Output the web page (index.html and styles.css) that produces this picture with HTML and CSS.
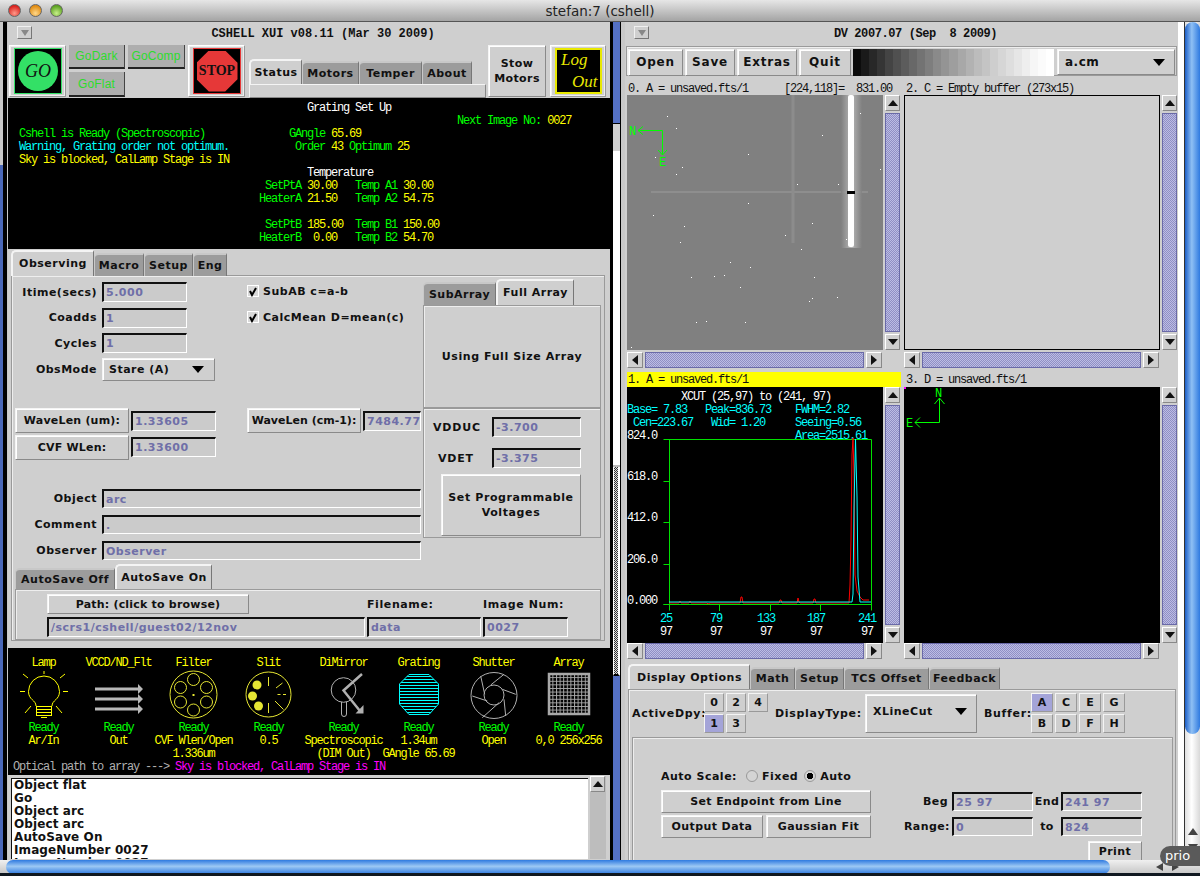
FILE: index.html
```html
<!DOCTYPE html>
<html lang="en">
<head>
<meta charset="utf-8">
<title>CSHELL XUI and DV</title>
<link rel="stylesheet" href="styles.css">
</head>
<body>
<div class="desktop">
  <div class="macbar">
    <span class="light red"></span><span class="light amber"></span><span class="light lime"></span>
    <span class="mactitle">stefan:7 (cshell)</span>
  </div>
  <div class="edge-left"></div>
  <div class="gap"><div class="seg-blue1"></div><div class="seg-grey"></div><div class="seg-white"></div><div class="seg-dith"></div><div class="seg-blue2"></div></div>

  <section class="win win-left">
    <header class="wintitle">
      <span class="menubtn"><i></i></span>
      <h1>CSHELL XUI v08.11 (Mar 30 2009)</h1>
    </header>
    <div class="ctl">
      <div class="frame"><div class="inner inner-go"><div class="go">GO</div></div></div>
      <div class="gobtns">
        <div class="gobtn">GoDark</div>
        <div class="gobtn">GoComp</div>
        <div class="gobtn">GoFlat</div>
      </div>
      <div class="frame"><div class="inner inner-stop"><div class="stop">STOP</div></div></div>
      <div class="status-tabs">
        <div class="tabs">
          <div class="tab on t-status">Status</div>
          <div class="tab t-motors">Motors</div>
          <div class="tab t-temper">Temper</div>
          <div class="tab t-about">About</div>
        </div>
        <div class="tabfill"></div>
      </div>
      <div class="btn stow">Stow<br>Motors</div>
      <div class="frame frame-log"><div class="inner inner-log"><span>Log</span><span class="out">Out</span></div></div>
    </div>
<pre class="black status x"><span class="w">                                                Grating Set Up</span>
                                                                         <span class="g">Next Image No: </span><span class="y">0027</span>
<span class="g">Cshell is Ready (Spectroscopic)              GAngle </span><span class="y">65.69</span>
<span class="c">Warning, Grating order not optimum.</span>           <span class="g">Order </span><span class="y">43</span><span class="g"> Optimum </span><span class="y">25</span>
<span class="y">Sky is blocked, CalLamp Stage is IN</span>
<span class="w">                                                Temperature</span>
                                         <span class="g">SetPtA </span><span class="y">30.00</span><span class="g">   Temp A1 </span><span class="y">30.00</span>
                                        <span class="g">HeaterA </span><span class="y">21.50</span><span class="g">   Temp A2 </span><span class="y">54.75</span>

                                         <span class="g">SetPtB </span><span class="y">185.00</span><span class="g">  Temp B1 </span><span class="y">150.00</span>
                                        <span class="g">HeaterB  </span><span class="y">0.00</span><span class="g">   Temp B2 </span><span class="y">54.70</span></pre>

    <div class="obs">
      <div class="tabs obs-tabs">
        <div class="tab on t-observing">Observing</div>
        <div class="tab t-macro">Macro</div>
        <div class="tab t-setup">Setup</div>
        <div class="tab t-eng">Eng</div>
      </div>
      <div class="panel obs-panel">
        <div class="obs-main">
          <div class="obs-left">
            <div class="obs-top">
              <div class="fields">
                <div class="frow"><label class="lab">Itime(secs)</label><div class="field f85">5.000</div></div>
                <div class="frow"><label class="lab">Coadds</label><div class="field f85">1</div></div>
                <div class="frow"><label class="lab">Cycles</label><div class="field f85">1</div></div>
                <div class="frow frow-sel"><label class="lab">ObsMode</label><div class="select sel-obs">Stare (A)<i class="caret"></i></div></div>
              </div>
              <div class="checks">
                <div class="check"><span class="box"><svg viewBox="0 0 11 11" width="11" height="11"><path d="M2 5l2 4 4-7" fill="none" stroke="#000" stroke-width="2"/></svg></span>SubAB c=a-b</div>
                <div class="check"><span class="box"><svg viewBox="0 0 11 11" width="11" height="11"><path d="M2 5l2 4 4-7" fill="none" stroke="#000" stroke-width="2"/></svg></span>CalcMean D=mean(c)</div>
              </div>
            </div>
            <div class="wrow wrow1">
              <div class="btn wbtn">WaveLen (um):</div><div class="field f85">1.33605</div>
              <div class="btn wbtn wbtn2">WaveLen (cm-1):</div><div class="field f58">7484.77</div>
            </div>
            <div class="wrow wrow2">
              <div class="btn wbtn">CVF WLen:</div><div class="field f85">1.33600</div>
            </div>
            <div class="longs">
              <div class="lrow"><label class="lab">Object</label><div class="field flong">arc</div></div>
              <div class="lrow"><label class="lab">Comment</label><div class="field flong">.</div></div>
              <div class="lrow"><label class="lab">Observer</label><div class="field flong">Observer</div></div>
            </div>
          </div>
          <div class="obs-right">
            <div class="tabs sub-tabs">
              <div class="tab t-sub">SubArray</div>
              <div class="tab on t-full">Full Array</div>
            </div>
            <div class="panel fullsize">Using Full Size Array</div>
            <div class="panel volt">
              <div class="vrow"><span class="vlab">VDDUC</span><div class="field f89">-3.700</div></div>
              <div class="vrow"><span class="vlab vlab2">VDET</span><div class="field f89">-3.375</div></div>
              <div class="btn vbtn">Set Programmable<br>Voltages</div>
            </div>
          </div>
        </div>
        <div class="tabs save-tabs">
          <div class="tab t-off">AutoSave Off</div>
          <div class="tab on t-on">AutoSave On</div>
        </div>
        <div class="panel save">
          <div class="btn pathbtn">Path: (click to browse)</div>
          <span class="savelab">Filename:</span>
          <span class="savelab">Image Num:</span>
          <div class="field">/scrs1/cshell/guest02/12nov</div>
          <div class="field">data</div>
          <div class="field">0027</div>
        </div>
      </div>
    </div>

    <div class="black mech x">
      <div class="mechgrid">
        <div class="mc"><b class="y">Lamp</b>
          <svg class="ic" width="62" height="51" viewBox="0 0 62 51"><g fill="none" stroke="#ffff00"><path d="M23 36C23 30 15.500 30 15.500 21.500A15.500 15.500 0 1 1 46.500 21.500C46.500 30 39 30 39 36"/><path d="M23.500 36.500h15M23.500 39.500h15M23.500 42.500h15M23.500 45.500h15M23.500 36v10M38.500 36v10M28 47.500h6M31 1v3M7 21.500h5M50 21.500h5M10 4l5 4M52 4l-5 4M12 43l6-7M49 43l-6-7"/></g></svg>
          <span class="g">Ready</span><span class="y">Ar/In</span></div>
        <div class="mc"><b class="y">VCCD/ND_Flt</b>
          <svg class="ic" width="62" height="51" viewBox="0 0 62 51"><g fill="none" stroke="#b8b8b8" stroke-width="3"><path d="M7 19h44M7 29h44M7 39h44"/></g><path d="M50 14l5 5-5 5zM50 24l5 5-5 5zM50 34l5 5-5 5z" fill="#b8b8b8"/></svg>
          <span class="g">Ready</span><span class="y">Out</span></div>
        <div class="mc"><b class="y">Filter</b>
          <svg class="ic" width="62" height="51" viewBox="0 0 62 51"><g fill="none" stroke="#e6e633"><circle cx="30.500" cy="24.500" r="23.500"/><circle cx="30.500" cy="9.500" r="6"/><circle cx="17.500" cy="17.500" r="6"/><circle cx="43.500" cy="17.500" r="6"/><circle cx="17.500" cy="32" r="6"/><circle cx="43.500" cy="32" r="6"/><circle cx="30.500" cy="40" r="6"/></g><rect x="29.500" y="24" width="2" height="2" fill="#e6e633"/></svg>
          <span class="g">Ready</span><span class="y">CVF Wlen/Open</span><span class="y">1.336um</span></div>
        <div class="mc"><b class="y">Slit</b>
          <svg class="ic" width="62" height="51" viewBox="0 0 62 51"><circle cx="30.500" cy="24.500" r="22.500" fill="none" stroke="#e6e633"/><g fill="#e6e633"><circle cx="19" cy="15" r="4.500"/><circle cx="14.500" cy="26" r="4.500"/><circle cx="20.500" cy="36" r="4.500"/></g><path d="M30.500 7v9M38 18l6.500-5M39.500 24.500h3M45 24.500h3M37 31l8.500 8.500M30.500 33v10" fill="none" stroke="#e6e633"/></svg>
          <span class="g">Ready</span><span class="y">0.5</span></div>
        <div class="mc"><b class="y">DiMirror</b>
          <svg class="ic" width="62" height="51" viewBox="0 0 62 51"><g fill="none" stroke="#b0b0b0"><circle cx="30.500" cy="20" r="12.300"/><path d="M28.500 32v12a2.500 2.500 0 0 0 5 0v-12"/></g><path d="M49 4L30.500 20.500 47 41" fill="none" stroke="#b0b0b0" stroke-width="2.500"/><path d="M50.500 35v8.500h-8z" fill="#b0b0b0"/></svg>
          <span class="g">Ready</span><span class="y">Spectroscopic</span><span class="y">(DIM Out)</span></div>
        <div class="mc"><b class="y">Grating</b>
          <svg class="ic" width="62" height="51" viewBox="0 0 62 51"><defs><pattern id="grat" width="4" height="3" patternUnits="userSpaceOnUse"><rect width="4" height="1" fill="#00ffff"/></pattern></defs><path d="M21 4.500h20L50.500 14v20L41 44.500H21L11.500 34V14z" fill="url(#grat)" stroke="#00ffff"/></svg>
          <span class="g">Ready</span><span class="y">1.34um</span><span class="y">GAngle 65.69</span></div>
        <div class="mc"><b class="y">Shutter</b>
          <svg class="ic" width="62" height="51" viewBox="0 0 62 51"><g fill="none" stroke="#b0b0b0"><circle cx="31" cy="25.500" r="23"/><circle cx="31" cy="25" r="10"/><path d="M17.700 6l4 18.300M41 4.300L27.700 15M52.700 24.300L39.300 19.300M42.700 46L41 29.300M19.300 47.700L36 32.700M9.300 26L24.300 31"/></g></svg>
          <span class="g">Ready</span><span class="y">Open</span></div>
        <div class="mc"><b class="y">Array</b>
          <svg class="ic" width="62" height="51" viewBox="0 0 62 51"><defs><pattern id="arr" width="3.600" height="3.600" patternUnits="userSpaceOnUse"><path d="M0 .5h3.600M.5 0v3.600" stroke="#a8a8a8" fill="none"/></pattern></defs><rect x="11" y="4" width="40" height="40" fill="url(#arr)" stroke="#a8a8a8" stroke-width="2.500"/></svg>
          <span class="g">Ready</span><span class="y">0,0 256x256</span></div>
      </div>
      <div class="optical"><span class="gr">Optical path to array ---&gt; </span><span class="m">Sky is blocked, CalLamp Stage is IN</span></div>
    </div>

    <div class="logarea">
      <div class="logtext">Object flat<br>Go<br>Object arc<br>Object arc<br>AutoSave On<br>ImageNumber 0027<br>ImageNumber 0027</div>
      <div class="logscroll"><div class="sbtn up"></div></div>
    </div>
  </section>

  <section class="win win-right">
    <header class="wintitle wintitle-r">
      <span class="menubtn"><i></i></span>
      <h1>DV 2007.07 (Sep  8 2009)</h1>
    </header>
    <div class="dvbar">
      <div class="btn dv b-open">Open</div>
      <div class="btn dv b-save">Save</div>
      <div class="btn dv b-extras">Extras</div>
      <div class="btn dv b-quit">Quit</div>
      <div class="cmap"></div>
      <div class="select sel-cm">a.cm<i class="caret"></i></div>
    </div>
    <div class="panes">
      <div class="pane">
        <div class="plabel x">0. A = unsaved.fts/1      [224,118]=  831.00</div>
        <div class="pbody">
          <svg class="canvas" width="256" height="255" viewBox="0 0 256 255">
            <defs><linearGradient id="halo" x1="0" x2="1" y1="0" y2="0"><stop offset="0" stop-color="#808080"/><stop offset=".5" stop-color="#c4c4c4"/><stop offset="1" stop-color="#808080"/></linearGradient></defs>
            <rect width="256" height="255" fill="#808080"/>
            <path d="M24 97h217" stroke="#8e8e8e" stroke-width="2"/>
            <path d="M166 0v148" stroke="#8c8c8c" stroke-width="3"/>
            <rect x="214" y="0" width="21" height="153" fill="url(#halo)" opacity=".8"/>
            <rect x="221" y="0" width="6" height="152" rx="2" fill="#fff"/>
            <rect x="220" y="96" width="8" height="3" fill="#000"/>
            <g fill="#fff"><rect x="40" y="21" width="1" height="1"/><rect x="49" y="33" width="1" height="1"/><rect x="28" y="62" width="1" height="1"/><rect x="121" y="59" width="1" height="1"/><rect x="49" y="79" width="1" height="1"/><rect x="55" y="72" width="1" height="1"/><rect x="195" y="40" width="1" height="1"/><rect x="233" y="18" width="1" height="1"/><rect x="253" y="74" width="1" height="1"/><rect x="211" y="89" width="1" height="1"/><rect x="170" y="89" width="1" height="1"/><rect x="121" y="108" width="1" height="1"/><rect x="26" y="120" width="1" height="1"/><rect x="185" y="128" width="1" height="1"/><rect x="57" y="131" width="1" height="1"/><rect x="158" y="140" width="1" height="1"/><rect x="219" y="144" width="1" height="1"/><rect x="53" y="147" width="1" height="1"/><rect x="174" y="154" width="1" height="1"/><rect x="103" y="167" width="1" height="1"/><rect x="123" y="172" width="1" height="1"/><rect x="64" y="182" width="1" height="1"/><rect x="87" y="181" width="1" height="1"/><rect x="97" y="180" width="1" height="1"/><rect x="187" y="182" width="1" height="1"/><rect x="113" y="192" width="1" height="1"/><rect x="185" y="203" width="1" height="1"/><rect x="182" y="206" width="1" height="1"/><rect x="210" y="202" width="1" height="1"/><rect x="79" y="226" width="1" height="1"/><rect x="118" y="227" width="1" height="1"/><rect x="69" y="227" width="1" height="1"/><rect x="4" y="252" width="1" height="1"/></g>
            <path d="M11 35.500h24.500V60M11 35.500l5-4M11 35.500l5 4M35.500 60l-4.500-5M35.500 60l4.500-5" fill="none" stroke="#00ff00"/>
            <text class="st" x="2" y="40" fill="#00ff00">N</text>
            <text class="st" x="32" y="71" fill="#00ff00">E</text>
          </svg>
          <div class="vscroll"><div class="sbtn up"></div><div class="thumb"></div><div class="sbtn dn"></div></div>
        </div>
        <div class="hscroll"><div class="sbtn lf"></div><div class="thumb"></div><div class="sbtn rt"></div></div>
      </div>
      <div class="pane">
        <div class="plabel x">2. C = Empty buffer (273x15)</div>
        <div class="pbody">
          <div class="canvas empty"></div>
          <div class="vscroll"><div class="sbtn up"></div><div class="thumb"></div><div class="sbtn dn"></div></div>
        </div>
        <div class="hscroll"><div class="sbtn lf"></div><div class="thumb"></div><div class="sbtn rt"></div></div>
      </div>
      <div class="pane pane-low">
        <div class="plabel x plabel-on">1. A = unsaved.fts/1</div>
        <div class="pbody">
          <svg class="canvas" width="256" height="256" viewBox="0 0 256 256">
            <rect width="256" height="256" fill="#000"/>
            <g class="st">
              <text x="54" y="13" fill="#fff">XCUT (25,97) to (241, 97)</text>
              <text x="0" y="26" fill="#00ffff">Base= 7.83</text>
              <text x="78" y="26" fill="#00ffff">Peak=836.73</text>
              <text x="168" y="26" fill="#00ffff">FWHM=2.82</text>
              <text x="6" y="39" fill="#00ffff">Cen=223.67</text>
              <text x="84" y="39" fill="#00ffff">Wid= 1.20</text>
              <text x="168" y="39" fill="#00ffff">Seeing=0.56</text>
              <text x="168" y="52" fill="#00ffff">Area=2515.61</text>
              <text x="0" y="52" fill="#fff">824.0</text>
              <text x="0" y="93" fill="#fff">618.0</text>
              <text x="0" y="134" fill="#fff">412.0</text>
              <text x="0" y="176" fill="#fff">206.0</text>
              <text x="0" y="217" fill="#fff">0.000</text>
              <text x="33" y="235" fill="#00ffff">25</text>
              <text x="33" y="248" fill="#fff">97</text>
              <text x="83" y="235" fill="#00ffff">79</text>
              <text x="83" y="248" fill="#fff">97</text>
              <text x="130" y="235" fill="#00ffff">133</text>
              <text x="133" y="248" fill="#fff">97</text>
              <text x="180" y="235" fill="#00ffff">187</text>
              <text x="183" y="248" fill="#fff">97</text>
              <text x="231" y="235" fill="#00ffff">241</text>
              <text x="234" y="248" fill="#fff">97</text>
            </g>
            <path d="M36.500 52.500h208v171M36.500 217.500h208M42.500 52.500v171M36.500 94.500h6M36.500 135.500h6M36.500 177.500h6M36.500 217.500h6M92.500 217v7M143.500 217v7M193.500 217v7" fill="none" stroke="#00e000"/>
            <path d="M42 216h10l1-2 1 2h8l1-2 1 2h16l1 1 2-1h30l1-6h1l1 6h36l1-3h1l1 3h15l1-5 1 4 1 1h13l1-4h1l1 4h33l1-18 1-45 1-85 1-17 1 37 1 100 2 16 3 6 3 3h6" fill="none" stroke="#ff0000"/>
            <path d="M42 215h183l1-8 1-87 1.500-68 1.500 58 1 80 2 25h11" fill="none" stroke="#00ffff"/>
          </svg>
          <div class="vscroll"><div class="sbtn up"></div><div class="thumb"></div><div class="sbtn dn"></div></div>
        </div>
        <div class="hscroll"><div class="sbtn lf"></div><div class="thumb"></div><div class="sbtn rt"></div></div>
      </div>
      <div class="pane pane-low">
        <div class="plabel x">3. D = unsaved.fts/1</div>
        <div class="pbody">
          <svg class="canvas" width="256" height="256" viewBox="0 0 256 256">
            <rect width="256" height="256" fill="#000"/>
            <rect width="2" height="2" fill="#ff00ff"/>
            <path d="M35.500 11v24.500H11M35.500 11l-5 6M35.500 11l5 6M11 35.500l5-5M11 35.500l5 5" fill="none" stroke="#00ff00"/>
            <text class="st" x="31" y="10" fill="#00ff00">N</text>
            <text class="st" x="2" y="40" fill="#00ff00">E</text>
          </svg>
          <div class="vscroll"><div class="sbtn up"></div><div class="thumb"></div><div class="sbtn dn"></div></div>
        </div>
        <div class="hscroll"><div class="sbtn lf"></div><div class="thumb"></div><div class="sbtn rt"></div></div>
      </div>
    </div>

    <div class="tabs opt-tabs">
      <div class="tab on t-disp">Display Options</div>
      <div class="tab t-math">Math</div>
      <div class="tab t-set2">Setup</div>
      <div class="tab t-tcs">TCS Offset</div>
      <div class="tab t-feed">Feedback</div>
    </div>
    <div class="panel opt">
      <div class="optrow">
        <span class="optlab l-active">ActiveDpy:</span>
        <div class="dpy">
          <div class="cell">0</div><div class="cell">2</div><div class="cell">4</div>
          <div class="cell sel">1</div><div class="cell">3</div>
        </div>
        <span class="optlab l-type">DisplayType:</span>
        <div class="select sel-type">XLineCut<i class="caret"></i></div>
        <span class="optlab l-buf">Buffer:</span>
        <div class="bufs">
          <div class="cell sel">A</div><div class="cell">C</div><div class="cell">E</div><div class="cell">G</div>
          <div class="cell">B</div><div class="cell">D</div><div class="cell">F</div><div class="cell">H</div>
        </div>
      </div>
      <div class="panel cut">
        <div class="scale">
          <span>Auto Scale:</span><span class="radio"></span><span>Fixed</span><span class="radio on"></span><span>Auto</span>
        </div>
        <div class="cutgrid">
          <div class="cutbtns">
            <div class="btn c-set">Set Endpoint from Line</div>
            <div class="btn c-out">Output Data</div>
            <div class="btn c-gau">Gaussian Fit</div>
          </div>
          <div class="cutfields">
            <span class="cl">Beg</span><div class="field">25 97</div><span class="cl2">End</span><div class="field">241 97</div>
            <span class="cl">Range:</span><div class="field">0</div><span class="cl2">to</span><div class="field">824</div>
          </div>
        </div>
        <div class="btn printbtn">Print</div>
      </div>
    </div>
  </section>

  <div class="vbar-track"><div class="vbar"></div><i class="va va-up"></i><i class="va va-dn"></i></div>
  <div class="hbar-track"><div class="hbar"></div><i class="ha ha-l"></i><i class="ha ha-r"></i></div>
  <div class="prio">prio</div>
</div>
</body>
</html>
```

FILE: styles.css
```css
* { box-sizing: border-box; }
html, body { margin: 0; padding: 0; }
body { width: 1200px; height: 876px; overflow: hidden; background: #111; font-family: "DejaVu Sans", sans-serif; }
.desktop { position: relative; width: 1200px; height: 876px; overflow: hidden; background: #fff; }

/* mac chrome */
.macbar { position: absolute; left: 0; top: 0; width: 1200px; height: 22px; display: flex; align-items: center; background: linear-gradient(#e6e6e6, #a4a4a4); border-bottom: 1px solid #555; padding: 0 0 1px 8px; gap: 8px; z-index: 2; }
.light { width: 13px; height: 13px; border-radius: 50%; border: 1px solid #666; }
.light.red { background: radial-gradient(circle at 50% 75%, #ff9a8a, #d8201c 75%); }
.light.amber { background: radial-gradient(circle at 50% 75%, #ffd88a, #e08a10 75%); }
.light.lime { background: radial-gradient(circle at 50% 75%, #c8f08a, #5aa020 75%); }
.mactitle { position: absolute; left: 0; right: 0; top: 3px; text-align: center; font: 13.500px/16px "DejaVu Sans", sans-serif; color: #222; }
.edge-left { position: absolute; left: 0; top: 22px; width: 8px; height: 838px; background: linear-gradient(90deg, transparent 3px, #000 3px, #000 7px, #c8c8c8 7px), linear-gradient(#c8c8c8 143px, #4a68b8 143px); }
.gap { position: absolute; left: 610px; top: 22px; width: 11px; height: 838px; border-left: 3px solid #000; border-right: 1px solid #000; box-shadow: 4px 0 0 #c8c8c8; display: flex; flex-direction: column; }
.seg-blue1 { height: 102px; background: #5470c4; border-bottom: 1px solid #000; }
.seg-grey { height: 27px; background: #d0d0d0; }
.seg-white { height: 316px; background: #fff; border-bottom: 2px solid #bbb; }
.seg-dith { height: 209px; background: repeating-conic-gradient(#333 0 25%, #ddd 0 50%) 0 0 / 2px 2px; border-right: 2px solid #fff; border-left: 1px solid #fff; border-bottom: 2px solid #000; }
.seg-blue2 { flex: 1; background: #5470c4; }

/* windows */
.win { position: absolute; top: 22px; background: #cfcfcf; overflow: hidden; }
.win-left { left: 8px; width: 602px; height: 840px; }
.win-right { left: 625px; width: 553px; height: 840px; }
.wintitle { position: relative; height: 23px; display: flex; align-items: center; justify-content: center; }
.wintitle h1 { margin: 0; font: bold 12px/18px "Liberation Mono", monospace; white-space: pre; color: #111; position: relative; left: 14px; }
.wintitle-r h1 { left: 14px; font-size: 12px; letter-spacing: -.4px; }
.menubtn { position: absolute; left: 9px; top: 4px; width: 15px; height: 13px; border: 1px solid; border-color: #f0f0f0 #777 #777 #f0f0f0; display: flex; align-items: center; justify-content: center; }
.menubtn i { width: 0; height: 0; border-left: 4px solid transparent; border-right: 4px solid transparent; border-top: 6px solid #888; }

.btn { background: #cfcfcf; border: 1px solid; border-color: #f4f4f4 #8a8a8a #8a8a8a #f4f4f4; box-shadow: inset 1px 1px 0 #fff; display: flex; align-items: center; justify-content: center; text-align: center; font: bold 11px/15px "DejaVu Sans", sans-serif; letter-spacing: .4px; color: #111; white-space: nowrap; }

/* control row */
.ctl { display: flex; height: 53px; padding-left: 1px; }
.frame { width: 57px; height: 52px; border: 1px solid; border-color: #fff #999 #999 #fff; box-shadow: inset 0 0 0 1px #eee; padding: 2px 3px 2px 4px; flex: none; }
.inner { width: 100%; height: 100%; background: #000; display: flex; align-items: center; justify-content: center; }
.inner-go { border: 1px solid #33e066; }
.go { width: 40px; height: 40px; border-radius: 50%; background: #33e066; display: flex; align-items: center; justify-content: center; font: italic 18px "Liberation Serif", serif; color: #111; }
.gobtns { width: 116px; margin: 0 3px; display: grid; grid-template-columns: 56px 57px; column-gap: 3px; row-gap: 3px; grid-template-rows: 24px 25px; flex: none; }
.gobtn { background: #aeaeae; border-right: 1px solid #444; border-bottom: 2px solid #222; color: #2cdc2c; display: flex; align-items: center; justify-content: center; font: 12px "Liberation Sans", sans-serif; letter-spacing: .2px; white-space: nowrap; }
.inner-stop { border: 1px solid #e63838; }
.stop { width: 41px; height: 41px; background: #e63838; clip-path: polygon(30% 0, 70% 0, 100% 30%, 100% 70%, 70% 100%, 30% 100%, 0 70%, 0 30%); display: flex; align-items: center; justify-content: center; font: bold 14px "Liberation Serif", serif; color: #111; }
.status-tabs { width: 237px; margin-left: 4px; padding-top: 14px; flex: none; }
.tabs { display: flex; align-items: flex-end; }
.tab { background: #9c9c9c; border-top: 2px solid #c8c8c8; border-left: 1px solid #c8c8c8; border-right: 1px solid #777; border-top-left-radius: 5px; display: flex; align-items: center; justify-content: center; font: bold 11px/14px "DejaVu Sans", sans-serif; letter-spacing: .5px; color: #111; white-space: nowrap; flex: none; }
.tab.on { background: #cfcfcf; border-top: 2px solid #f4f4f4; border-left: 2px solid #f4f4f4; font-weight: 600; z-index: 1; }
.t-status { width: 53px; height: 25px; }
.t-motors { width: 57px; height: 23px; }
.t-temper { width: 63px; height: 23px; }
.t-about { width: 50px; height: 23px; }
.tabfill { height: 14px; border: 1px solid; border-color: #f4f4f4 #888 #888 #f4f4f4; }
.stow { width: 58px; height: 52px; margin-left: 2px; flex: none; font-size: 11px; line-height: 15px; }
.frame-log { margin-left: 4px; width: 56px; }
.inner-log { border: 2px solid #e8e800; flex-direction: column; align-items: flex-start; padding-left: 4px; font: italic 17px/22px "Liberation Serif", serif; color: #e8e800; }
.inner-log .out { margin-left: 11px; }

/* status + fixed-font panels */
.x { font: 12px/13px "Liberation Mono", monospace; letter-spacing: -1.2px; white-space: pre; margin: 0; }
.st { font: 12px "Liberation Mono", monospace; letter-spacing: -1.2px; white-space: pre; }
.black { background: #000; color: #0f0; }
.status { height: 151px; padding: 4px 0 0 11px; }
.g { color: #00ff00; } .y { color: #ffff00; } .c { color: #00ffff; } .w { color: #fff; } .m { color: #ff00ff; } .gr { color: #b0b0b0; }

/* observing */
.obs { height: 399px; padding: 1px 0 0 3px; }
.obs-tabs { height: 26px; }
.t-observing { width: 83px; height: 26px; }
.t-macro { width: 50px; height: 23px; }
.t-setup { width: 49px; height: 23px; }
.t-eng { width: 34px; height: 23px; }
.panel { background: #cfcfcf; border: 1px solid #9a9a9a; box-shadow: inset 1px 1px 0 #eee; }
.obs-panel { width: 594px; height: 366px; margin-top: -1px; padding-top: 3px; }
.obs-main { display: flex; height: 285px; }
.obs-left { width: 411px; padding-top: 3px; flex: none; }
.obs-top { display: flex; height: 98px; }
.fields { width: 235px; flex: none; }
.frow { display: flex; height: 20px; margin-bottom: 5.500px; align-items: center; }
.frow-sel { height: 23px; margin-top: -1px; }
.lab { width: 85px; margin-right: 5px; text-align: right; font: bold 11px "DejaVu Sans", sans-serif; letter-spacing: .5px; color: #111; flex: none; white-space: nowrap; }
.field { height: 20px; background: #cbcbcb; border: 1px solid #fff; border-top: 2px solid #111; border-left: 2px solid #111; padding-left: 2px; font: bold 11px/17px "DejaVu Sans", sans-serif; letter-spacing: .5px; color: #6f6fa8; white-space: nowrap; overflow: hidden; flex: none; }
.f85 { width: 85px; } .f58 { width: 58px; } .f89 { width: 89px; } .flong { width: 319px; height: 19px; }
.select { background: #cfcfcf; border: 1px solid; border-color: #f4f4f4 #8a8a8a #8a8a8a #f4f4f4; box-shadow: inset 1px 1px 0 #fff; display: flex; align-items: center; justify-content: space-between; font: bold 11px "DejaVu Sans", sans-serif; letter-spacing: .5px; color: #111; flex: none; }
.caret { width: 0; height: 0; border-left: 6px solid transparent; border-right: 6px solid transparent; border-top: 7px solid #000; }
.sel-obs { width: 113px; height: 23px; padding: 0 10px 0 6px; }
.checks { display: flex; flex-direction: column; gap: 14px; padding-top: 3px; }
.check { display: flex; align-items: center; gap: 4px; height: 12px; font: bold 11px "DejaVu Sans", sans-serif; letter-spacing: .5px; color: #111; white-space: nowrap; }
.box { width: 12px; height: 12px; background: #d8d8d8; border: 1px solid #fff; display: block; flex: none; }
.box svg { display: block; }
.wrow { display: flex; padding-left: 3px; gap: 2px; align-items: center; }
.wrow1 { margin-top: 28px; height: 25px; }
.wrow2 { margin-top: 2px; height: 24px; }
.wbtn { width: 114px; height: 25px; flex: none; letter-spacing: .2px; }
.wbtn2 { margin-left: 29px; letter-spacing: 0; }
.longs { margin-top: 30px; display: flex; flex-direction: column; gap: 7px; }
.lrow { display: flex; height: 19px; align-items: center; }
.obs-right { width: 178px; }
.sub-tabs { height: 26px; }
.t-sub { width: 73px; height: 23px; }
.t-full { width: 78px; height: 26px; }
.fullsize { height: 103px; display: flex; align-items: center; justify-content: center; font: bold 11px "DejaVu Sans", sans-serif; letter-spacing: .6px; color: #111; }
.volt { height: 130px; margin-top: 0; padding: 8px 0 0 9px; }
.vrow { display: flex; align-items: center; height: 20px; margin-bottom: 11px; }
.vlab { width: 59px; font: bold 11px "DejaVu Sans", sans-serif; letter-spacing: .8px; color: #111; }
.vlab2 { padding-left: 5px; }
.vbtn { width: 140px; height: 62px; margin: -5px 0 0 8px; line-height: 15px; letter-spacing: .6px; }
.save-tabs { margin: 0 0 0 3px; height: 25px; }
.t-off { width: 100px; height: 21px; }
.t-on { width: 97px; height: 25px; }
.save { width: 586px; height: 51px; margin-left: 3px; padding: 4px 0 0 31px; display: grid; grid-template-columns: 318px 114px 85px; column-gap: 2px; row-gap: 3px; grid-template-rows: 20px 20px; align-items: center; }
.pathbtn { width: 202px; height: 20px; letter-spacing: .2px; }
.savelab { font: bold 11px "DejaVu Sans", sans-serif; letter-spacing: .6px; color: #111; }

/* mechanisms */
.mech { height: 127px; padding-top: 9px; white-space: normal; }
.mechgrid { display: grid; grid-template-columns: repeat(8, 75px); margin-left: -2px; height: 104px; }
.mc { display: flex; flex-direction: column; align-items: center; white-space: pre; }
.mc b { font-weight: normal; height: 13px; }
.mc span { height: 13px; }
.ic { display: block; flex: none; margin-bottom: 1px; }
.optical { padding-left: 5px; margin-top: 0; white-space: pre; }

/* log */
.logarea { display: flex; height: 84px; padding: 3px 2px 0 3px; }
.logtext { width: 577px; height: 81px; background: #fff; border-top: 1px solid #111; border-left: 1px solid #111; overflow: hidden; padding: 0 0 0 2px; font: bold 12px/13px "DejaVu Sans", sans-serif; color: #111; letter-spacing: .1px; }
.logscroll { width: 16px; margin-left: 2px; background: #bdbdbd; margin-top: -2px; }

/* scroll parts */
.sbtn { flex: none; width: 15px; height: 16px; background: #cfcfcf; border: 1px solid; border-color: #fff #888 #888 #fff; position: relative; }
.sbtn::after { content: ""; position: absolute; left: 50%; top: 50%; transform: translate(-50%, -50%); width: 0; height: 0; }
.up::after { border-left: 5px solid transparent; border-right: 5px solid transparent; border-bottom: 6px solid #111; }
.dn::after { border-left: 5px solid transparent; border-right: 5px solid transparent; border-top: 6px solid #111; }
.lf::after { border-top: 5px solid transparent; border-bottom: 5px solid transparent; border-right: 6px solid #111; }
.rt::after { border-top: 5px solid transparent; border-bottom: 5px solid transparent; border-left: 6px solid #111; }
.thumb { flex: 1; background: repeating-conic-gradient(#8f8fc4 0 25%, #bcbce4 0 50%) 0 0 / 2px 2px; border: 1px solid #6a6aa8; }
.vscroll { width: 15px; margin-left: 2px; display: flex; flex-direction: column; gap: 2px; flex: none; }
.hscroll { display: flex; gap: 2px; width: 255px; height: 16px; margin-top: 2px; }
.hscroll .sbtn { width: 16px; height: 16px; }

/* DV */
.dvbar { margin: 1px 0 3px 1px; height: 30px; display: flex; gap: 2px; padding: 2px 2px 1px 1px; border: 1px solid #9a9a9a; box-shadow: inset 1px 1px 0 #eee; width: 551px; }
.dv { height: 27px; flex: none; letter-spacing: .8px; font-size: 12px; }
.b-open { width: 55px; } .b-save { width: 50px; } .b-extras { width: 60px; } .b-quit { width: 52px; }
.cmap { width: 201px; height: 27px; flex: none; background: linear-gradient(90deg, #0c0c0c 0 4%, #1a1a1a 0 8%, #282828 0 12%, #353535 0 16%, #444 0 20%, #505050 0 24%, #5c5c5c 0 28%, #686868 0 32%, #737373 0 36%, #7e7e7e 0 40%, #8a8a8a 0 44%, #949494 0 48%, #9e9e9e 0 52%, #a8a8a8 0 56%, #b2b2b2 0 60%, #bcbcbc 0 64%, #c4c4c4 0 68%, #cecece 0 72%, #d6d6d6 0 76%, #dedede 0 80%, #e6e6e6 0 84%, #eee 0 88%, #f6f6f6 0 92%, #fbfbfb 0 96%, #fff 0); }
.sel-cm { width: 118px; height: 26px; margin-left: 1px; padding: 0 9px 0 7px; font-size: 12px; }
.panes { display: grid; grid-template-columns: 277px 272px; margin-left: 2px; }
.pane { height: 293px; }
.pane-low { height: 288px; }
.plabel { height: 16px; padding-left: 1px; line-height: 20px; color: #111; }
.plabel-on { background: #ffff00; height: 15px; line-height: 15px; width: 274px; }
.pane-low .plabel { line-height: 16px; height: 15px; }
.pbody { display: flex; }
.canvas { display: block; flex: none; }
.empty { width: 256px; height: 255px; background: #cfcfcf; border: 1px solid #000; }
.pane-low .empty { height: 256px; }
.pane-low .hscroll { margin-top: 0; }
.pane-low .vscroll, .pane .vscroll { height: 255px; }
.pane-low .vscroll { height: 256px; }
.pane:nth-child(even) .plabel { padding-left: 2px; }
.pane-low .sbtn.up, .pane-low .sbtn.dn { height: 16px; }

.opt-tabs { margin: 4px 0 0 3px; height: 25px; }
.t-disp { width: 122px; height: 25px; }
.t-math { width: 45px; height: 22px; }
.t-set2 { width: 49px; height: 22px; }
.t-tcs { width: 85px; height: 22px; }
.t-feed { width: 71px; height: 22px; }
.opt { margin-left: 3px; width: 548px; height: 172px; }
.optrow { display: flex; height: 46px; align-items: center; padding-left: 3px; }
.optlab { font: bold 11px "DejaVu Sans", sans-serif; letter-spacing: .7px; color: #111; white-space: nowrap; flex: none; }
.l-active { width: 72px; }
.dpy { display: grid; grid-template-columns: repeat(3, 20px); gap: 2px; grid-auto-rows: 19px; width: 66px; flex: none; }
.bufs { display: grid; grid-template-columns: repeat(4, 22px); gap: 2px; grid-auto-rows: 19px; flex: none; }
.cell { background: #cfcfcf; border: 1px solid; border-color: #f4f4f4 #999 #999 #f4f4f4; display: flex; align-items: center; justify-content: center; font: bold 11px "DejaVu Sans", sans-serif; color: #111; }
.cell.sel { background: #a4a4d8; }
.l-type { margin-left: 5px; width: 90px; }
.sel-type { width: 112px; height: 39px; padding: 0 9px 4px 7px; }
.l-buf { margin-left: 7px; width: 47px; }
.cut { margin: 1px 0 0 3px; width: 541px; height: 124px; padding: 31px 0 0 28px; position: relative; }
.scale { display: flex; align-items: center; gap: 4px; height: 14px; font: bold 11px "DejaVu Sans", sans-serif; letter-spacing: .5px; color: #111; white-space: nowrap; }
.scale span:first-child { margin-right: 3px; }
.radio { width: 12px; height: 12px; border-radius: 50%; background: #d4d4d4; border: 1px solid #999; margin-left: 2px; }
.radio.on { background: radial-gradient(circle, #000 0 3px, #d4d4d4 3.500px); }
.cutgrid { display: flex; margin-top: 7px; }
.cutbtns { width: 210px; display: grid; grid-template-columns: 102px 105px; gap: 2px 3px; grid-auto-rows: 23px; flex: none; }
.c-set { grid-column: 1 / 3; }
.cutfields { display: grid; grid-template-columns: 48px 81px 28px 81px; margin-left: 33px; padding-top: 2px; row-gap: 6px; grid-auto-rows: 19px; align-items: center; }
.cutfields .field { height: 19px; }
.cl { text-align: right; padding-right: 4px; font: bold 11px "DejaVu Sans", sans-serif; color: #111; letter-spacing: .4px; }
.cl2 { text-align: center; font: bold 11px "DejaVu Sans", sans-serif; color: #111; letter-spacing: .4px; }
.printbtn { width: 54px; height: 21px; margin: 3px 0 0 427px; }

/* outer scrollbars */
.vbar-track { position: absolute; left: 1184px; top: 22px; width: 16px; height: 838px; background: linear-gradient(90deg, #e0e0e0, #fff 45%, #d8d8d8); border-left: 1px solid #333; }
.vbar { height: 712px; border-radius: 8px; background: linear-gradient(90deg, #1c5fc8, #8fc0f4 45%, #2f7ae0); }
.va { position: absolute; left: 3px; width: 0; height: 0; border-left: 5px solid transparent; border-right: 5px solid transparent; }
.va-up { top: 806px; border-bottom: 7px solid #444; }
.va-dn { top: 822px; border-top: 7px solid #444; }
.hbar-track { position: absolute; left: 0; top: 860px; width: 1200px; height: 13px; background: linear-gradient(#f0f0f0, #c8c8c8); display: flex; align-items: center; }
.hbar { width: 1104px; height: 14px; margin-left: 6px; border-radius: 7px; background: linear-gradient(#2f7ae0, #9cc8f4 45%, #2f7ae0); flex: none; }
.ha { width: 0; height: 0; border-top: 4px solid transparent; border-bottom: 4px solid transparent; flex: none; }
.ha-l { margin-left: 46px; border-right: 7px solid #444; }
.ha-r { margin-left: 9px; border-left: 7px solid #444; }
.desktop::after { content: ""; position: absolute; left: 0; top: 873px; width: 1200px; height: 3px; background: #101820; }
.prio { position: absolute; left: 1160px; top: 846px; width: 46px; height: 20px; border-radius: 10px 0 0 10px; background: #5a5a5a; color: #fff; font: 13px/20px "DejaVu Sans", sans-serif; padding-left: 5px; z-index: 3; }
```
